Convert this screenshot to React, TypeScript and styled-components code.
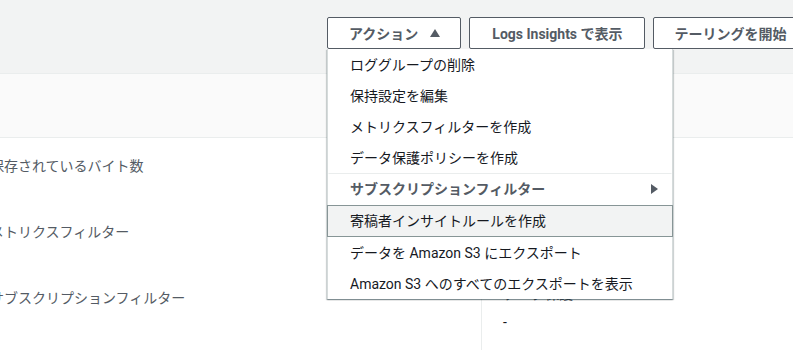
import React from 'react';
import styled, { createGlobalStyle } from 'styled-components';

const GlobalStyle = createGlobalStyle`
	html, body {
		margin: 0;
		padding: 0;
		background: #ffffff;
		overflow: hidden;
	}
	body {
		font-family: Roboto, "Noto Sans CJK JP", sans-serif;
		font-size: 14px;
		color: #16191f;
	}
`;

const Page = styled.div`
	width: 793px;
	height: 350px;
	overflow: hidden;
`;

const Header = styled.div`
	height: 74px;
	background: #f2f3f3;
	border-bottom: 1px solid #eaeded;
	display: flex;
	align-items: flex-start;
	gap: 8px;
	padding: 17px 0 0 327px;
	box-sizing: border-box;
	white-space: nowrap;
	position: relative;
	z-index: 2;
`;

const ButtonWrap = styled.div`
	position: relative;
	flex: none;
`;

const Button = styled.button<{ pad?: number }>`
	display: flex;
	align-items: center;
	gap: 12px;
	height: 32px;
	padding: 0 ${p => p.pad ?? 20}px 0 ${p => (p.pad ?? 20) + 1}px;
	border: 1px solid #545b64;
	border-radius: 2px;
	background: #ffffff;
	color: #545b64;
	font-family: inherit;
	font-size: 14px;
	font-weight: 700;
	white-space: nowrap;
	cursor: pointer;
	box-sizing: border-box;
	flex: none;
`;

const Caret = styled.span<{ dir: 'up' | 'right' }>`
	width: 0;
	height: 0;
	border-style: solid;
	${p =>
		p.dir === 'up'
			? `border-width: 0 5.5px 8px 5.5px; border-color: transparent transparent #545b64 transparent;`
			: `border-width: 5px 0 5px 7px; border-color: transparent transparent transparent #545b64;`}
`;

const Menu = styled.ul`
	position: absolute;
	top: 32px;
	left: 0;
	width: 346px;
	margin: 0;
	padding: 0;
	list-style: none;
	background: #ffffff;
	box-sizing: border-box;
	border-left: 1px solid #d5dbdb;
	border-right: 1px solid #d5dbdb;
	box-shadow: 0 1px 1px 0 rgba(0, 28, 36, 0.3), 1px 1px 1px 0 rgba(0, 28, 36, 0.15),
		-1px 1px 1px 0 rgba(0, 28, 36, 0.15);
	z-index: 5;
`;

const MenuItem = styled.li<{ highlighted?: boolean; group?: boolean; divider?: boolean }>`
	display: flex;
	align-items: center;
	justify-content: space-between;
	padding: 0 13px 0 21px;
	box-sizing: border-box;
	line-height: 20px;
	white-space: nowrap;
	color: ${p => (p.group ? '#545b64' : '#16191f')};
	font-weight: ${p => (p.group ? 700 : 400)};
	background: ${p => (p.highlighted ? '#f2f3f3' : 'transparent')};
	border: 1px solid ${p => (p.highlighted ? '#879596' : 'transparent')};
	border-top: ${p => (p.divider ? '1px solid #eaeded' : undefined)};
	margin: ${p => (p.highlighted ? '0 -1px' : '0')};
	height: ${p => (p.highlighted || p.divider ? '32px' : '31px')};
	padding-left: ${p => (p.highlighted ? '22px' : '21px')};
`;

const Band = styled.div`
	height: 64px;
	background: #fafafa;
	border-bottom: 1px solid #eaeded;
	box-sizing: border-box;
`;

const Body = styled.div`
	display: grid;
	grid-template-columns: 491px 1fr;
	margin-left: -10px;
	height: 213px;
`;

const Column = styled.div<{ bordered?: boolean }>`
	display: flex;
	flex-direction: column;
	gap: 46px;
	padding: ${p => (p.bordered ? '146px 0 0 21px' : '17px 0 0 0')};
	border-left: ${p => (p.bordered ? '1px solid #eaeded' : 'none')};
`;

const Field = styled.div`
	display: flex;
	flex-direction: column;
	gap: 8px;
	line-height: 20px;
`;

const Label = styled.div`
	color: #545b64;
	white-space: nowrap;
`;

const Value = styled.div`
	color: #16191f;
`;

const menuItems = [
	'ロググループの削除',
	'保持設定を編集',
	'メトリクスフィルターを作成',
	'データ保護ポリシーを作成'
];

export default function App() {
	return (
		<Page>
			<GlobalStyle />
			<Header>
				<ButtonWrap>
					<Button>
						アクション
						<Caret dir="up" />
					</Button>
					<Menu>
						{menuItems.map(item => (
							<MenuItem key={item}>{item}</MenuItem>
						))}
						<MenuItem group divider>
							サブスクリプションフィルター
							<Caret dir="right" />
						</MenuItem>
						<MenuItem highlighted>寄稿者インサイトルールを作成</MenuItem>
						<MenuItem>データを Amazon S3 にエクスポート</MenuItem>
						<MenuItem>Amazon S3 へのすべてのエクスポートを表示</MenuItem>
					</Menu>
				</ButtonWrap>
				<Button pad={21}>Logs Insights で表示</Button>
				<Button>テーリングを開始</Button>
			</Header>
			<Band />
			<Body>
				<Column>
					<Label>保存されているバイト数</Label>
					<Label>メトリクスフィルター</Label>
					<Label>サブスクリプションフィルター</Label>
				</Column>
				<Column bordered>
					<Field>
						<Label>データ保護</Label>
						<Value>-</Value>
					</Field>
				</Column>
			</Body>
		</Page>
	);
}
